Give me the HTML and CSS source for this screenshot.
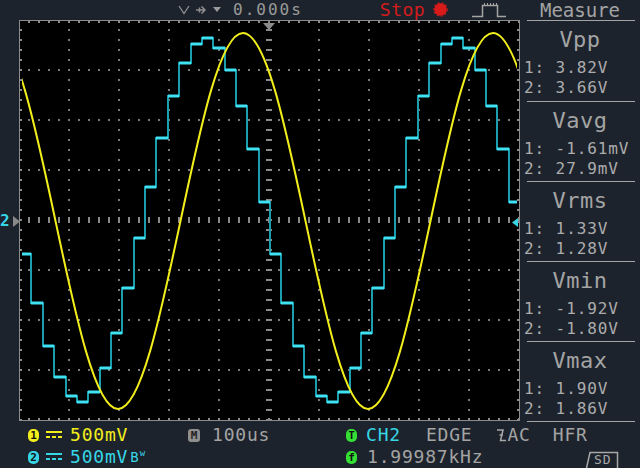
FILE: index.html
```html
<!DOCTYPE html>
<html>
<head>
<meta charset="utf-8">
<link rel="stylesheet" href="styles.css">
</head>
<body>
<div class="scope">
  <header class="topbar">
    <div class="top-main">
      <svg class="hpos-icons" width="45" height="20" viewBox="0 0 45 20">
        <polyline points="1,6 6,13.5 11,6" fill="none" stroke="#8e8e8e" stroke-width="1.3"/>
        <path d="M18 10 H27 M23.5 6.5 L27 10 L23.5 13.5 M21.5 7.5 V12.5" fill="none" stroke="#8e8e8e" stroke-width="1.5"/>
        <polygon points="35,7 43,7 39,12" fill="#9a9a9a"/>
      </svg>
      <span class="hpos">0.000s</span>
      <span class="run">Stop</span>
      <svg class="run-dot" width="15" height="15" viewBox="0 0 15 15">
        <circle cx="7.5" cy="7.5" r="6.2" fill="#d81a1a"/>
        <circle cx="7.5" cy="7.5" r="6.6" fill="none" stroke="#d81a1a" stroke-width="1.2" stroke-dasharray="2 2"/>
      </svg>
      <svg class="trig-icon" width="35" height="20" viewBox="0 0 35 20">
        <path d="M0 16.5 H10.5 V5.5 H25.5 V16.5 H34" fill="none" stroke="#a4a4a4" stroke-width="1.5"/>
        <path d="M12 4 H25" fill="none" stroke="#a4a4a4" stroke-width="2" stroke-dasharray="1 2"/>
      </svg>
    </div>
    <div class="top-title">Measure</div>
  </header>

  <main class="middle">
    <div class="gutter">
      <div class="lmark">
        <span class="lmark-num">2</span>
        <svg width="8" height="11" viewBox="0 0 8 11"><polygon points="1,0 8,5.5 1,11" fill="#8a8a8a"/></svg>
      </div>
    </div>

    <svg class="screen" width="501" height="401" viewBox="0 0 501 401">
      <defs>
        <pattern id="dv" x="-1" y="-1" width="50" height="10" patternUnits="userSpaceOnUse">
          <rect x="0" y="0" width="2" height="2" fill="#7a7a7a"/>
        </pattern>
        <pattern id="dh" x="-1" y="-1" width="10" height="50" patternUnits="userSpaceOnUse">
          <rect x="0" y="0" width="2" height="2" fill="#7a7a7a"/>
        </pattern>
        <pattern id="tx" x="-1" y="0" width="10" height="401" patternUnits="userSpaceOnUse">
          <rect x="0" y="0" width="2" height="401" fill="#8a8a8a"/>
        </pattern>
        <pattern id="ty" x="0" y="-1" width="501" height="10" patternUnits="userSpaceOnUse">
          <rect x="0" y="0" width="501" height="2" fill="#8a8a8a"/>
        </pattern>
        <clipPath id="trace-clip"><rect x="3" y="1" width="495" height="399"/></clipPath>
      </defs>

      <rect x="0.5" y="0.5" width="500" height="400" fill="#000" stroke="#8c8c8c" stroke-width="1"/>
      <rect x="1" y="1" width="499" height="399" fill="url(#dv)"/>
      <rect x="1" y="1" width="499" height="399" fill="url(#dh)"/>
      <rect x="1" y="197" width="499" height="6" fill="url(#tx)"/>
      <rect x="247" y="1" width="6" height="399" fill="url(#ty)"/>
      <rect x="1" y="1" width="499" height="2" fill="url(#tx)"/>
      <rect x="1" y="398" width="499" height="2" fill="url(#tx)"/>
      <rect x="1" y="1" width="2" height="399" fill="url(#ty)"/>
      <rect x="498" y="1" width="2" height="399" fill="url(#ty)"/>

      <polygon points="244,3 256,3 250,10" fill="#8c8c8c"/>

      <g clip-path="url(#trace-clip)" fill="none">
        <path class="ch2-v" d="M3 234 H12 V283 H24 V326 H35 V357 H47 V376 H58 V382 H69 V372 H81 V348 H92 V313 H103 V268 H115 V218 H126 V167 H137 V118 H149 V76 H160 V43 H172 V24 H183 V18 H194 V28 H206 V50 H217 V86 H228 V129 H240 V182 H251 V234 H262 V283 H274 V326 H285 V357 H297 V376 H308 V382 H319 V372 H331 V348 H342 V313 H353 V268 H365 V218 H376 V167 H387 V118 H399 V76 H410 V43 H422 V24 H433 V18 H444 V28 H456 V50 H467 V86 H478 V129 H490 V182 H498"/>
        <path class="ch2-h" d="M3 234H12 M12 283H24 M24 326H35 M35 357H47 M47 376H58 M58 382H69 M69 372H81 M81 348H92 M92 313H103 M103 268H115 M115 218H126 M126 167H137 M137 118H149 M149 76H160 M160 43H172 M172 24H183 M183 18H194 M194 28H206 M206 50H217 M217 86H228 M228 129H240 M240 182H251 M251 234H262 M262 283H274 M274 326H285 M285 357H297 M297 376H308 M308 382H319 M319 372H331 M331 348H342 M342 313H353 M353 268H365 M365 218H376 M376 167H387 M387 118H399 M399 76H410 M410 43H422 M422 24H433 M433 18H444 M444 28H456 M456 50H467 M467 86H478 M478 129H490 M490 182H498"/>
        <path class="ch1" d="M-26 13 c22.62 0 42.12 91.7 62.5 188 c20.38 96.3 39.88 188 62.5 188 c22.62 0 42.12 -91.7 62.5 -188 c20.38 -96.3 39.88 -188 62.5 -188 c22.62 0 42.12 91.7 62.5 188 c20.38 96.3 39.88 188 62.5 188 c22.62 0 42.12 -91.7 62.5 -188 c20.38 -96.3 39.88 -188 62.5 -188 c22.62 0 42.12 91.7 62.5 188"/>
      </g>

      <polygon points="499,198 499,207 493,202.5" fill="#36d6e6"/>
    </svg>

    <aside class="measure">
      <div class="rule"></div>
      <section class="meas meas-first">
        <div class="mname">Vpp</div>
        <div class="mval">1: 3.82V</div>
        <div class="mval">2: 3.66V</div>
      </section>
      <div class="rule"></div>
      <section class="meas">
        <div class="mname">Vavg</div>
        <div class="mval">1: -1.61mV</div>
        <div class="mval">2: 27.9mV</div>
      </section>
      <div class="rule"></div>
      <section class="meas">
        <div class="mname">Vrms</div>
        <div class="mval">1: 1.33V</div>
        <div class="mval">2: 1.28V</div>
      </section>
      <div class="rule"></div>
      <section class="meas">
        <div class="mname">Vmin</div>
        <div class="mval">1: -1.92V</div>
        <div class="mval">2: -1.80V</div>
      </section>
      <div class="rule"></div>
      <section class="meas">
        <div class="mname">Vmax</div>
        <div class="mval">1: 1.90V</div>
        <div class="mval">2: 1.86V</div>
      </section>
      <div class="rule"></div>
    </aside>
  </main>

  <footer class="bottombar">
    <div class="cell ch1-text">
      <span class="badge badge-ch1">1</span>
      <svg class="dc" width="16" height="8" viewBox="0 0 16 8"><rect x="0" y="0" width="16" height="2" fill="currentColor"/><path d="M0 6 H16" stroke="currentColor" stroke-width="2" stroke-dasharray="4 2"/></svg>
      <span class="val">500mV</span>
    </div>
    <div class="cell">
      <span class="badge badge-m">M</span>
      <span class="val">100us</span>
    </div>
    <div class="cell">
      <span class="badge badge-g">T</span>
      <span class="ch2-text trig-src">CH2</span>
      <span class="trig-type">EDGE</span>
      <svg class="slope" width="9" height="14" viewBox="0 0 9 14"><path d="M0 2 H6 L3.5 12.5 H9 M2.5 7 H6" fill="none" stroke="#a8a8a8" stroke-width="1.5"/></svg>
      <span class="coupling">AC</span>
      <span class="hfr">HFR</span>
    </div>
    <div class="cell ch2-text">
      <span class="badge badge-ch2">2</span>
      <svg class="dc" width="16" height="8" viewBox="0 0 16 8"><rect x="0" y="0" width="16" height="2" fill="currentColor"/><path d="M0 6 H16" stroke="currentColor" stroke-width="2" stroke-dasharray="4 2"/></svg>
      <span class="val">500mV</span>
      <span class="bw">B</span><span class="bw-w">w</span>
    </div>
    <div class="cell"></div>
    <div class="cell">
      <span class="badge badge-g">f</span>
      <span class="freq">1.99987kHz</span>
      <svg class="sd" width="34" height="17" viewBox="0 0 34 17">
        <path d="M1.5 17 L5 1.5 H32.5 V17" fill="none" stroke="#a8a8a8" stroke-width="1.5"/>
        <text x="9" y="13" font-family="DejaVu Sans Mono, monospace" font-size="13" fill="#a8a8a8">SD</text>
      </svg>
    </div>
  </footer>
</div>
</body>
</html>
```

FILE: styles.css
```css
html, body {
  margin: 0;
  padding: 0;
}

body {
  width: 640px;
  height: 468px;
  overflow: hidden;
  background: #1d232c;
  color: #a4a4a4;
  font-family: "DejaVu Sans Mono", "Liberation Mono", monospace;
}

.scope {
  display: flex;
  flex-direction: column;
  width: 640px;
  height: 468px;
}

/* ---------- top bar ---------- */
.topbar {
  display: flex;
  height: 20px;
  flex: none;
}

.top-main {
  width: 520px;
  display: flex;
  align-items: flex-start;
}

.hpos-icons {
  display: block;
  margin-left: 178px;
}

.hpos {
  margin-left: 10px;
  font-size: 16px;
  letter-spacing: 2px;
  line-height: 20px;
  color: #9a9a9a;
}

.run {
  margin-left: 77px;
  font-size: 18px;
  letter-spacing: 0.5px;
  line-height: 20px;
  color: #d41c1c;
}

.run-dot {
  display: block;
  margin-left: 8px;
  margin-top: 2px;
}

.trig-icon {
  display: block;
  margin-left: 24px;
}

.top-title {
  width: 120px;
  text-align: center;
  font-size: 19px;
  line-height: 20px;
  color: #a4a4a4;
}

/* ---------- middle ---------- */
.middle {
  display: flex;
  height: 402px;
  flex: none;
}

.gutter {
  width: 19px;
  position: relative;
  flex: none;
}

.lmark {
  position: absolute;
  left: 0;
  top: 193px;
  display: flex;
  align-items: center;
  gap: 2px;
}

.lmark-num {
  color: #36d6e6;
  font-size: 16px;
  font-weight: bold;
  line-height: 16px;
}

.lmark svg {
  display: block;
}

.screen {
  display: block;
  flex: none;
}

.ch2-v {
  stroke: #1b9fae;
  stroke-width: 2;
}

.ch2-h {
  stroke: #3fe2f2;
  stroke-width: 3;
}

.ch1 {
  stroke: #f2ee1c;
  stroke-width: 2;
}

.measure {
  width: 120px;
  flex: none;
  display: flex;
  flex-direction: column;
}

.rule {
  height: 1px;
  background: #a4a4a4;
  margin: 0 5px 0 7px;
  flex: none;
}

.meas {
  height: 79px;
  box-sizing: border-box;
  padding-top: 7px;
  flex: none;
}

.meas-first {
  height: 80px;
}

.mname {
  text-align: center;
  font-size: 22px;
  letter-spacing: 0.5px;
  line-height: 24px;
  margin-bottom: 6px;
  color: #a4a4a4;
}

.mval {
  padding-left: 4px;
  font-size: 16px;
  letter-spacing: 0.9px;
  line-height: 20px;
  white-space: nowrap;
  color: #acacac;
}

/* ---------- bottom bar ---------- */
.bottombar {
  display: grid;
  grid-template-columns: 160px 158px 1fr;
  grid-template-rows: 22px 22px;
  padding: 2px 0 0 28px;
  height: 46px;
  box-sizing: border-box;
  flex: none;
}

.cell {
  display: flex;
  align-items: center;
  font-size: 18px;
  letter-spacing: 0.8px;
  line-height: 22px;
  white-space: nowrap;
}

.ch1-text {
  color: #f2ee1c;
}

.ch2-text {
  color: #36d6e6;
}

.badge {
  display: flex;
  align-items: center;
  justify-content: center;
  width: 11px;
  height: 13px;
  border-radius: 5px;
  font-size: 11px;
  font-weight: bold;
  letter-spacing: 0;
  line-height: 1;
  color: #111;
  flex: none;
}

.badge-ch1 { background: #f2ee1c; }
.badge-ch2 { background: #36d6e6; }
.badge-g { background: #34e034; }

.badge-m {
  width: 12px;
  border-radius: 3px;
  background: #8e8e8e;
  color: #222;
}

.dc {
  display: block;
  margin-left: 7px;
}

.val {
  margin-left: 8px;
}

.badge-m + .val {
  margin-left: 12px;
}

.bw {
  font-size: 14px;
  letter-spacing: 0;
  margin-left: 2px;
}

.bw-w {
  font-size: 9px;
  letter-spacing: 0;
  line-height: 9px;
  align-self: flex-start;
  margin-top: 3px;
  margin-left: 1px;
}

.trig-src {
  margin-left: 9px;
}

.trig-type {
  margin-left: 25px;
}

.slope {
  display: block;
  margin-left: 25px;
}

.coupling {
  margin-left: 1px;
}

.hfr {
  margin-left: 22px;
}

.freq {
  margin-left: 10px;
}

.sd {
  display: block;
  margin-left: auto;
  margin-right: 21px;
  align-self: flex-end;
}
```
